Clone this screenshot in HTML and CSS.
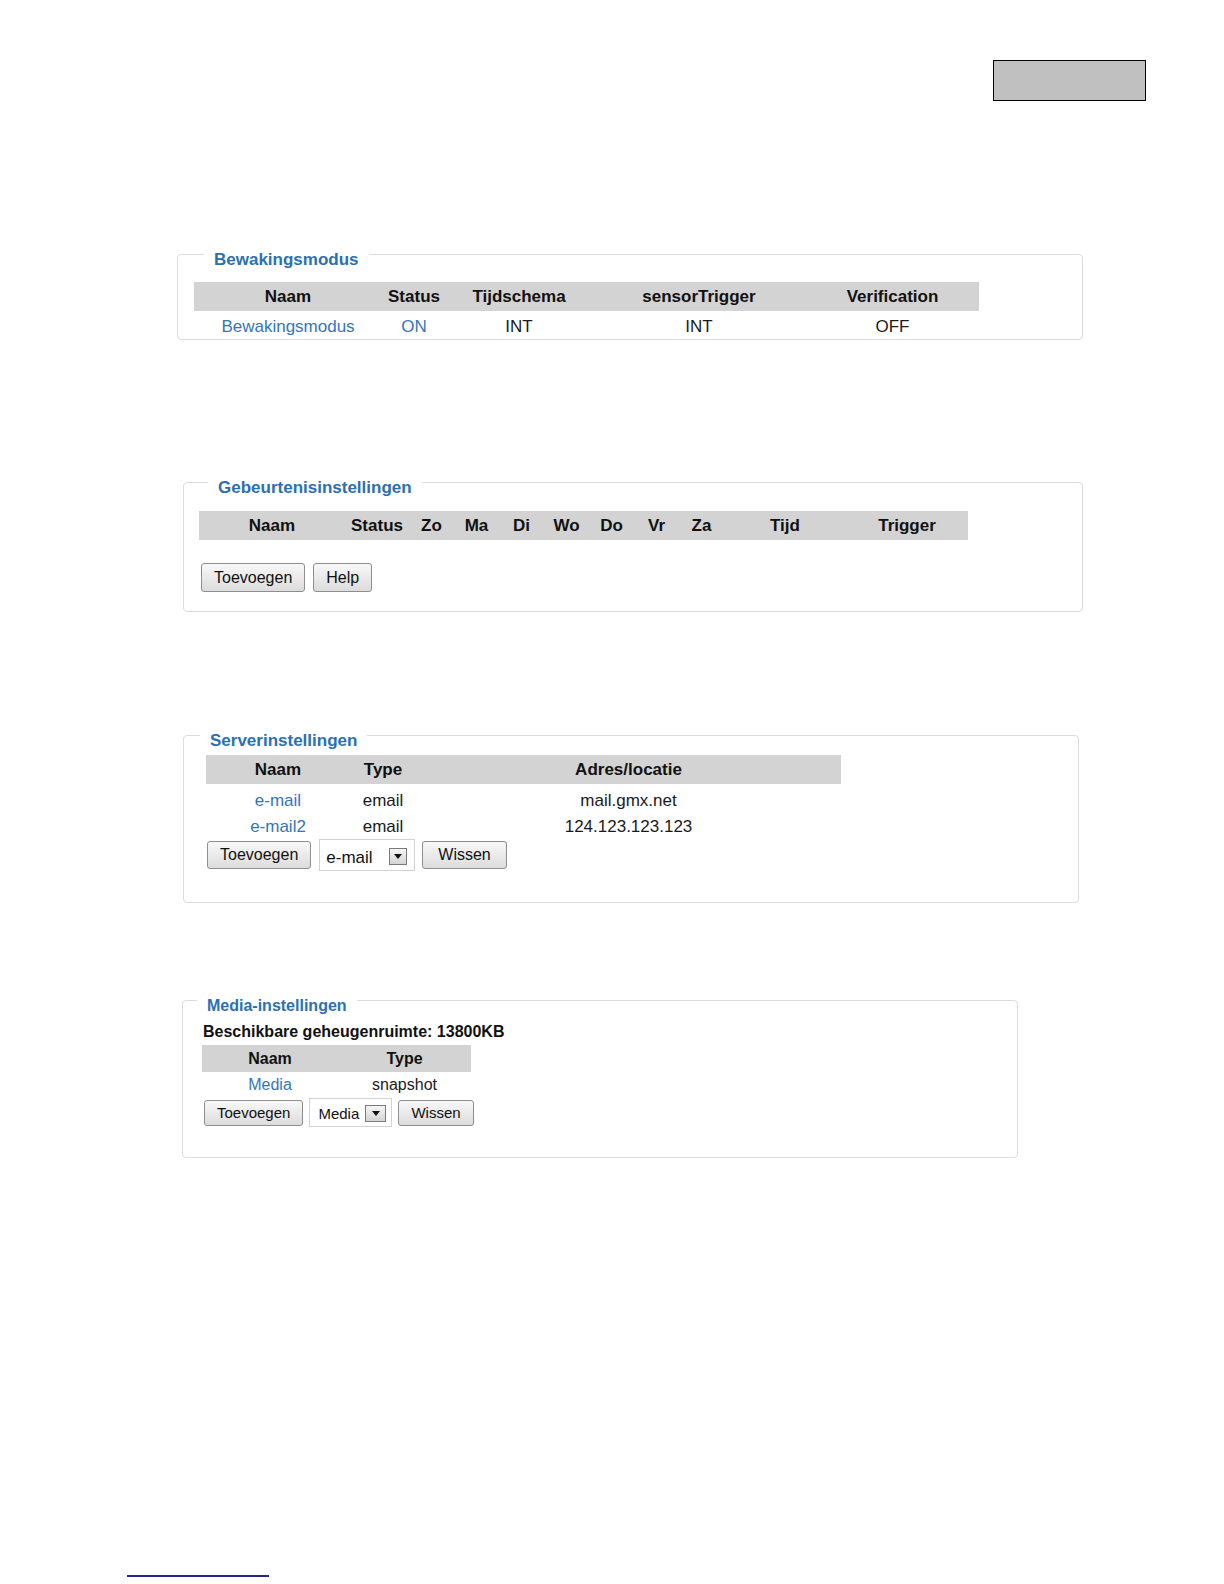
FILE: index.html
```html
<!DOCTYPE html>
<html>
<head>
    <meta charset="utf-8">
    <link rel="stylesheet" href="styles.css">
</head>
<body>
    <div class="top">
        <div class="stamp"></div>
    </div>

    <fieldset class="panel panel-mode">
        <legend>Bewakingsmodus</legend>
        <table class="grid grid-mode">
            <colgroup><col><col><col><col><col></colgroup>
            <thead>
                <tr><th>Naam</th><th>Status</th><th>Tijdschema</th><th>sensorTrigger</th><th>Verification</th></tr>
            </thead>
            <tbody>
                <tr><td><a href="#">Bewakingsmodus</a></td><td><a href="#">ON</a></td><td>INT</td><td>INT</td><td>OFF</td></tr>
            </tbody>
        </table>
    </fieldset>

    <fieldset class="panel panel-event">
        <legend>Gebeurtenisinstellingen</legend>
        <table class="grid grid-event">
            <colgroup><col><col><col><col><col><col><col><col><col><col><col></colgroup>
            <thead>
                <tr>
                    <th>Naam</th><th>Status</th><th>Zo</th><th>Ma</th><th>Di</th><th>Wo</th>
                    <th>Do</th><th>Vr</th><th>Za</th><th>Tijd</th><th>Trigger</th>
                </tr>
            </thead>
        </table>
        <div class="actions actions-event">
            <button class="btn">Toevoegen</button>
            <button class="btn">Help</button>
        </div>
    </fieldset>

    <fieldset class="panel panel-server">
        <legend>Serverinstellingen</legend>
        <table class="grid grid-server">
            <colgroup><col><col><col></colgroup>
            <thead>
                <tr><th>Naam</th><th>Type</th><th>Adres/locatie</th></tr>
            </thead>
            <tbody>
                <tr><td><a href="#">e-mail</a></td><td>email</td><td>mail.gmx.net</td></tr>
                <tr><td><a href="#">e-mail2</a></td><td>email</td><td>124.123.123.123</td></tr>
            </tbody>
        </table>
        <div class="actions actions-server">
            <button class="btn">Toevoegen</button>
            <div class="picker">
                <span class="picker-value">e-mail</span>
                <span class="picker-arrow"><svg width="8" height="5" viewBox="0 0 8 5"><path d="M0 0h8L4 5z" fill="#111"/></svg></span>
            </div>
            <button class="btn btn-wide">Wissen</button>
        </div>
    </fieldset>

    <fieldset class="panel panel-media">
        <legend>Media-instellingen</legend>
        <div class="storage">Beschikbare geheugenruimte: 13800KB</div>
        <table class="grid grid-media">
            <colgroup><col><col></colgroup>
            <thead>
                <tr><th>Naam</th><th>Type</th></tr>
            </thead>
            <tbody>
                <tr><td><a href="#">Media</a></td><td>snapshot</td></tr>
            </tbody>
        </table>
        <div class="actions actions-media">
            <button class="btn">Toevoegen</button>
            <div class="picker">
                <span class="picker-value">Media</span>
                <span class="picker-arrow"><svg width="8" height="5" viewBox="0 0 8 5"><path d="M0 0h8L4 5z" fill="#111"/></svg></span>
            </div>
            <button class="btn">Wissen</button>
        </div>
    </fieldset>

    <div class="footer-line"></div>
</body>
</html>
```

FILE: styles.css
```css
html {
    background: #fff;
}

body {
    margin: 0;
    width: 1224px;
    font-family: "Liberation Sans", Arial, sans-serif;
    font-size: 17px;
    color: #111;
}

.top {
    display: flex;
    justify-content: flex-end;
    padding: 60px 78px 0 0;
}

.stamp {
    width: 153px;
    height: 41px;
    box-sizing: border-box;
    background: #c0c0c0;
    border: 1px solid #000;
}

/* fieldset panels */
.panel {
    box-sizing: border-box;
    min-width: 0;
    margin: 0;
    border: 1px solid #dcdcdc;
    border-radius: 4px;
}

.panel legend {
    padding: 12px 10px 0;
    font-size: 17px;
    line-height: 20px;
    font-weight: bold;
    color: #2b6fb5;
}

.panel-mode {
    width: 906px;
    margin: 137px 0 0 177px;
    padding: 12px 0 0 16px;
}

.panel-mode legend {
    margin-left: 10px;
}

.panel-event {
    width: 900px;
    margin: 126px 0 0 183px;
    padding: 13px 0 19px 15px;
}

.panel-event legend {
    margin-left: 9px;
}

.panel-server {
    width: 896px;
    margin: 107px 0 0 183px;
    padding: 4px 0 31px 22px;
}

.panel-server legend {
    margin-left: -6px;
}

.panel-media {
    width: 836px;
    margin: 81px 0 0 182px;
    padding: 5px 0 30px 19px;
    font-size: 16px;
}

.panel-media legend {
    margin-left: -5px;
    font-size: 16px;
}

/* tables */
.grid {
    border-collapse: collapse;
    table-layout: fixed;
}

.grid th,
.grid td {
    padding: 0;
    text-align: center;
    white-space: nowrap;
}

.grid th {
    height: 29px;
    background: #d3d3d3;
    font-weight: bold;
    color: #111;
}

.grid td {
    height: 27px;
    color: #1a1a1a;
}

.grid a {
    color: #3574bf;
    text-decoration: none;
}

.grid-mode { width: 785px; }
.grid-mode col:nth-child(1) { width: 188px; }
.grid-mode col:nth-child(2) { width: 64px; }
.grid-mode col:nth-child(3) { width: 146px; }
.grid-mode col:nth-child(4) { width: 214px; }
.grid-mode col:nth-child(5) { width: 173px; }

.grid-mode td {
    height: 25px;
    padding-top: 3px;
}

.grid-event { width: 769px; }
.grid-event col { width: 45px; }
.grid-event col:nth-child(1) { width: 146px; }
.grid-event col:nth-child(2) { width: 64px; }
.grid-event col:nth-child(10),
.grid-event col:nth-child(11) { width: 122px; }

.grid-server { width: 635px; }
.grid-server col:nth-child(1) { width: 144px; }
.grid-server col:nth-child(2) { width: 66px; }
.grid-server col:nth-child(3) { width: 425px; }

.grid-server td {
    height: 26px;
}

.grid-server tbody tr:first-child td {
    padding-top: 4px;
}

.grid-media { width: 269px; }
.grid-media col:nth-child(1) { width: 136px; }
.grid-media col:nth-child(2) { width: 133px; }

.grid-media th {
    height: 27px;
}

.grid-media td {
    height: 25px;
}

.storage {
    margin: 0 0 2px 1px;
    line-height: 22px;
    font-weight: bold;
}

/* buttons and pickers */
.actions {
    display: flex;
    align-items: center;
}

.btn {
    box-sizing: border-box;
    margin: 0;
    padding: 0 12px;
    border: 1px solid #8e8e8e;
    border-radius: 3px;
    background: linear-gradient(#f8f8f8, #dcdcdc);
    font-family: "Liberation Sans", Arial, sans-serif;
    font-size: 16px;
    color: #111;
}

.btn-wide {
    padding: 0 15px;
}

.picker {
    box-sizing: border-box;
    display: flex;
    align-items: center;
    justify-content: space-between;
    border: 1px solid #d2d2d2;
    background: #fff;
    color: #111;
}

.picker-arrow {
    box-sizing: border-box;
    display: flex;
    align-items: center;
    justify-content: center;
    border: 1px solid #7a7a7a;
    background: linear-gradient(#f6f6f6, #d4d4d4);
}

.actions-event {
    gap: 8px;
    margin: 23px 0 0 2px;
}

.actions-event .btn {
    height: 29px;
}

.actions-server {
    gap: 7px;
    margin: -1px 0 0 1px;
}

.actions-server .btn {
    height: 28px;
}

.actions-server .btn:first-child {
    margin-right: 1px;
}

.actions-server .picker {
    width: 96px;
    height: 32px;
    padding: 0 7px 0 6px;
    font-size: 17px;
}

.actions-server .picker-value {
    padding-top: 5px;
}

.actions-server .picker-arrow {
    width: 18px;
    height: 17px;
    margin-top: 3px;
}

.actions-media {
    gap: 6px;
    margin: 1px 0 0 2px;
}

.actions-media .btn {
    height: 26px;
    padding: 0 12px;
    font-size: 15px;
}

.actions-media .picker {
    width: 83px;
    height: 29px;
    padding: 0 5px 0 8px;
    font-size: 15px;
}

.actions-media .picker-value {
    padding-top: 2px;
}

.actions-media .picker-arrow {
    width: 21px;
    height: 17px;
    margin-top: 2px;
}

.footer-line {
    width: 142px;
    height: 2px;
    margin: 417px 0 0 127px;
    background: #24248c;
}
```
